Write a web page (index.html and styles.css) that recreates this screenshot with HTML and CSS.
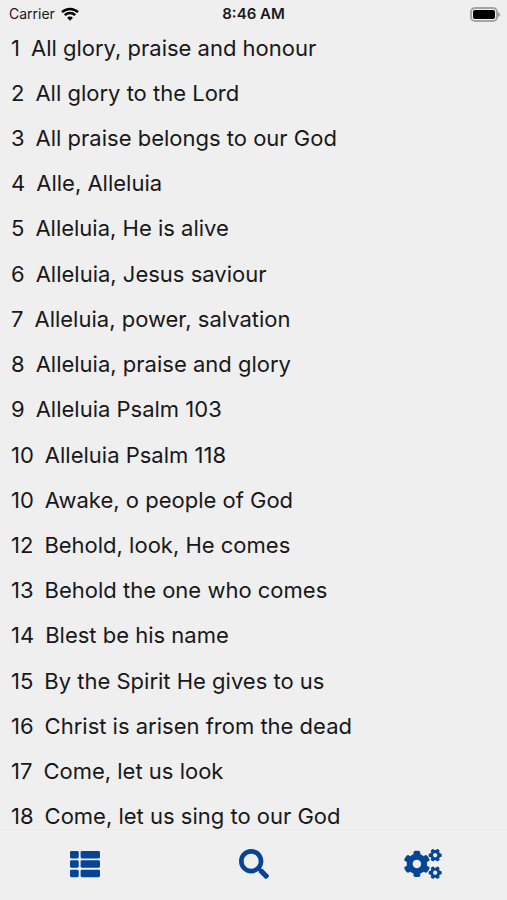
FILE: index.html
```html
<!DOCTYPE html>
<html lang="en">
<head>
  <meta charset="UTF-8" />
  <meta name="viewport" content="width=device-width, initial-scale=1" />
  <title>Songs</title>
  <link rel="stylesheet" href="styles.css">
</head>
<body>
  <header class="status-bar">
    <div class="carrier">
      <span>Carrier</span>
      <svg class="wifi" viewBox="0 0 18 14" aria-hidden="true">
        <path d="M1 5.2C5.5 .9 12.5 .9 17 5.2" />
        <path d="M3.8 8.2C6.7 5.4 11.3 5.4 14.2 8.2" />
        <path class="dot" d="M9 13.7L6.1 10.8C7.7 9.2 10.3 9.2 11.9 10.8Z" />
      </svg>
    </div>
    <time class="clock">8:46 AM</time>
    <svg class="battery" viewBox="0 0 31 15" aria-hidden="true">
      <rect class="shell" x="1" y="1" width="26" height="13" rx="4" />
      <rect x="3" y="3" width="22" height="9" rx="2" />
      <path class="cap" d="M28 5C31 6 31 9 28 10Z" />
    </svg>
  </header>

  <main class="content">
    <ul class="song-list">
      <li><a href="#"><span>1</span><span>All glory, praise and honour</span></a></li>
      <li><a href="#"><span>2</span><span>All glory to the Lord</span></a></li>
      <li><a href="#"><span>3</span><span>All praise belongs to our God</span></a></li>
      <li><a href="#"><span>4</span><span>Alle, Alleluia</span></a></li>
      <li><a href="#"><span>5</span><span>Alleluia, He is alive</span></a></li>
      <li><a href="#"><span>6</span><span>Alleluia, Jesus saviour</span></a></li>
      <li><a href="#"><span>7</span><span>Alleluia, power, salvation</span></a></li>
      <li><a href="#"><span>8</span><span>Alleluia, praise and glory</span></a></li>
      <li><a href="#"><span>9</span><span>Alleluia Psalm 103</span></a></li>
      <li><a href="#"><span>10</span><span>Alleluia Psalm 118</span></a></li>
      <li><a href="#"><span>10</span><span>Awake, o people of God</span></a></li>
      <li><a href="#"><span>12</span><span>Behold, look, He comes</span></a></li>
      <li><a href="#"><span>13</span><span>Behold the one who comes</span></a></li>
      <li><a href="#"><span>14</span><span>Blest be his name</span></a></li>
      <li><a href="#"><span>15</span><span>By the Spirit He gives to us</span></a></li>
      <li><a href="#"><span>16</span><span>Christ is arisen from the dead</span></a></li>
      <li><a href="#"><span>17</span><span>Come, let us look</span></a></li>
      <li><a href="#"><span>18</span><span>Come, let us sing to our God</span></a></li>
    </ul>
  </main>

  <nav class="tab-bar">
    <button type="button" aria-label="Songs">
      <svg class="icon" viewBox="0 0 512 512" aria-hidden="true">
        <rect x="0" y="32" width="149" height="128" rx="24" />
        <rect x="181" y="32" width="331" height="128" rx="24" />
        <rect x="0" y="192" width="149" height="128" rx="24" />
        <rect x="181" y="192" width="331" height="128" rx="24" />
        <rect x="0" y="352" width="149" height="128" rx="24" />
        <rect x="181" y="352" width="331" height="128" rx="24" />
      </svg>
    </button>
    <button type="button" aria-label="Search">
      <svg class="icon" viewBox="0 0 512 512" aria-hidden="true">
        <path d="M505 442.7L405.3 343c-4.5-4.5-10.6-7-17-7H372c27.6-35.3 44-79.7 44-128C416 93.1 322.9 0 208 0S0 93.1 0 208s93.1 208 208 208c48.3 0 92.7-16.4 128-44v16.3c0 6.4 2.5 12.5 7 17l99.7 99.7c9.4 9.4 24.6 9.4 33.9 0l28.3-28.3c9.4-9.4 9.4-24.6.1-34zM208 336c-70.7 0-128-57.2-128-128 0-70.7 57.2-128 128-128 70.7 0 128 57.2 128 128 0 70.7-57.2 128-128 128z" />
      </svg>
    </button>
    <button type="button" aria-label="Settings">
      <svg class="icon icon-wide" viewBox="0 0 640 512" aria-hidden="true">
        <path id="small-cog" d="M512.1 191l-8.2 14.3c-3 5.3-9.4 7.5-15.1 5.4-11.8-4.4-22.6-10.7-32.1-18.6-4.6-3.8-5.8-10.5-2.8-15.7l8.2-14.3c-6.9-8-12.3-17.3-15.9-27.4h-16.5c-6 0-11.2-4.3-12.2-10.3-2-12-2.1-24.6 0-37.1 1-6 6.2-10.4 12.2-10.4h16.5c3.6-10.1 9-19.4 15.9-27.4l-8.2-14.3c-3-5.2-1.9-11.9 2.8-15.7 9.5-7.9 20.4-14.2 32.1-18.6 5.7-2.1 12.1.1 15.1 5.4l8.2 14.3c10.5-1.9 21.2-1.9 31.7 0L552 6.3c3-5.3 9.4-7.5 15.1-5.4 11.8 4.4 22.6 10.7 32.1 18.6 4.6 3.8 5.8 10.5 2.8 15.7l-8.2 14.3c6.9 8 12.3 17.3 15.9 27.4h16.5c6 0 11.2 4.3 12.2 10.3 2 12 2.1 24.6 0 37.1-1 6-6.2 10.4-12.2 10.4h-16.5c-3.6 10.1-9 19.4-15.9 27.4l8.2 14.3c3 5.2 1.9 11.9-2.8 15.7-9.5 7.9-20.4 14.2-32.1 18.6-5.7 2.1-12.1-.1-15.1-5.4l-8.2-14.3c-10.4 1.9-21.2 1.9-31.7 0zm-10.5-58.8c38.5 29.6 82.4-14.3 52.8-52.8-38.5-29.7-82.4 14.3-52.8 52.8z" />
        <use href="#small-cog" y="299" />
        <path d="M386.3 286.1l33.7 16.8c10.1 5.8 14.5 18.1 10.5 29.1-8.9 24.2-26.4 46.4-42.6 65.8-7.4 8.9-20.2 11.1-30.3 5.3l-29.1-16.8c-16 13.7-34.6 24.6-54.9 31.7v33.6c0 11.6-8.3 21.6-19.7 23.6-24.6 4.2-50.4 4.4-75.9 0-11.5-2-20-11.9-20-23.6V418c-20.3-7.2-38.9-18-54.9-31.7L74 403c-10 5.8-22.9 3.6-30.3-5.3-16.2-19.4-33.3-41.6-42.2-65.7-4-10.9.4-23.2 10.5-29.1l33.3-16.8c-3.9-20.9-3.9-42.4 0-63.4L12 205.8c-10.1-5.8-14.6-18.1-10.5-29 8.9-24.2 26-46.4 42.2-65.8 7.4-8.9 20.2-11.1 30.3-5.3l29.1 16.8c16-13.7 34.6-24.6 54.9-31.7V57.1c0-11.5 8.2-21.5 19.6-23.5 24.6-4.2 50.5-4.4 76-.1 11.5 2 20 11.9 20 23.6v33.6c20.3 7.2 38.9 18 54.9 31.7l29.1-16.8c10-5.8 22.9-3.6 30.3 5.3 16.2 19.4 33.2 41.6 42.1 65.8 4 10.9.1 23.2-10 29.1l-33.7 16.8c3.9 21 3.9 42.5 0 63.5zm-117.6 21.1c59.2-77-28.7-164.9-105.7-105.7-59.2 77 28.7 164.9 105.7 105.7z" />
      </svg>
    </button>
  </nav>
</body>
</html>
```
FILE: styles.css
```css
* {
  box-sizing: border-box;
}

body {
  margin: 0;
  height: 100vh;
  display: flex;
  flex-direction: column;
  background-color: #efefef;
  color: #18181a;
  font-family: Inter, "Liberation Sans", sans-serif;
}

.status-bar {
  display: grid;
  grid-template-columns: 1fr auto 1fr;
  align-items: center;
  padding: 4px 6px 1px;
  font-size: 14px;
  line-height: 20px;
}

.carrier {
  display: flex;
  align-items: center;
  gap: 6px;
  padding-left: 3px;
}

.wifi {
  width: 18px;
  height: 14px;
  fill: none;
  stroke: #000;
  stroke-width: 2.5;
}

.wifi .dot {
  fill: #000;
  stroke: none;
}

.clock {
  font-size: 15px;
  font-weight: 600;
}

.battery {
  width: 31px;
  height: 15px;
  justify-self: end;
}

.battery .shell {
  fill: none;
  stroke: #a5a5a5;
  stroke-width: 2;
}

.battery .cap {
  fill: #a5a5a5;
}

.content {
  flex: 1;
  min-height: 0;
  overflow-y: auto;
  scrollbar-width: none;
}

/* rows share the screen height, the last one runs under the tab bar */
.song-list {
  display: grid;
  grid-auto-rows: 1fr;
  min-height: calc(100vh - 86px);
  margin: 0;
  padding: 0;
  list-style: none;
}

.song-list a {
  display: flex;
  align-items: center;
  gap: 11px;
  height: 100%;
  min-height: 44px;
  padding: 0 11px;
  color: inherit;
  font-size: 22px;
  line-height: 28px;
  text-decoration: none;
}

.tab-bar {
  display: flex;
  border-top: 1px solid #eaeaea;
}

.tab-bar button {
  flex: 1;
  display: flex;
  justify-content: center;
  padding: 19px 0 21px;
  border: none;
  background: none;
  cursor: pointer;
}

.icon {
  width: 30px;
  height: 30px;
  fill: #064496;
}

.icon-wide {
  width: 38px;
}
```
